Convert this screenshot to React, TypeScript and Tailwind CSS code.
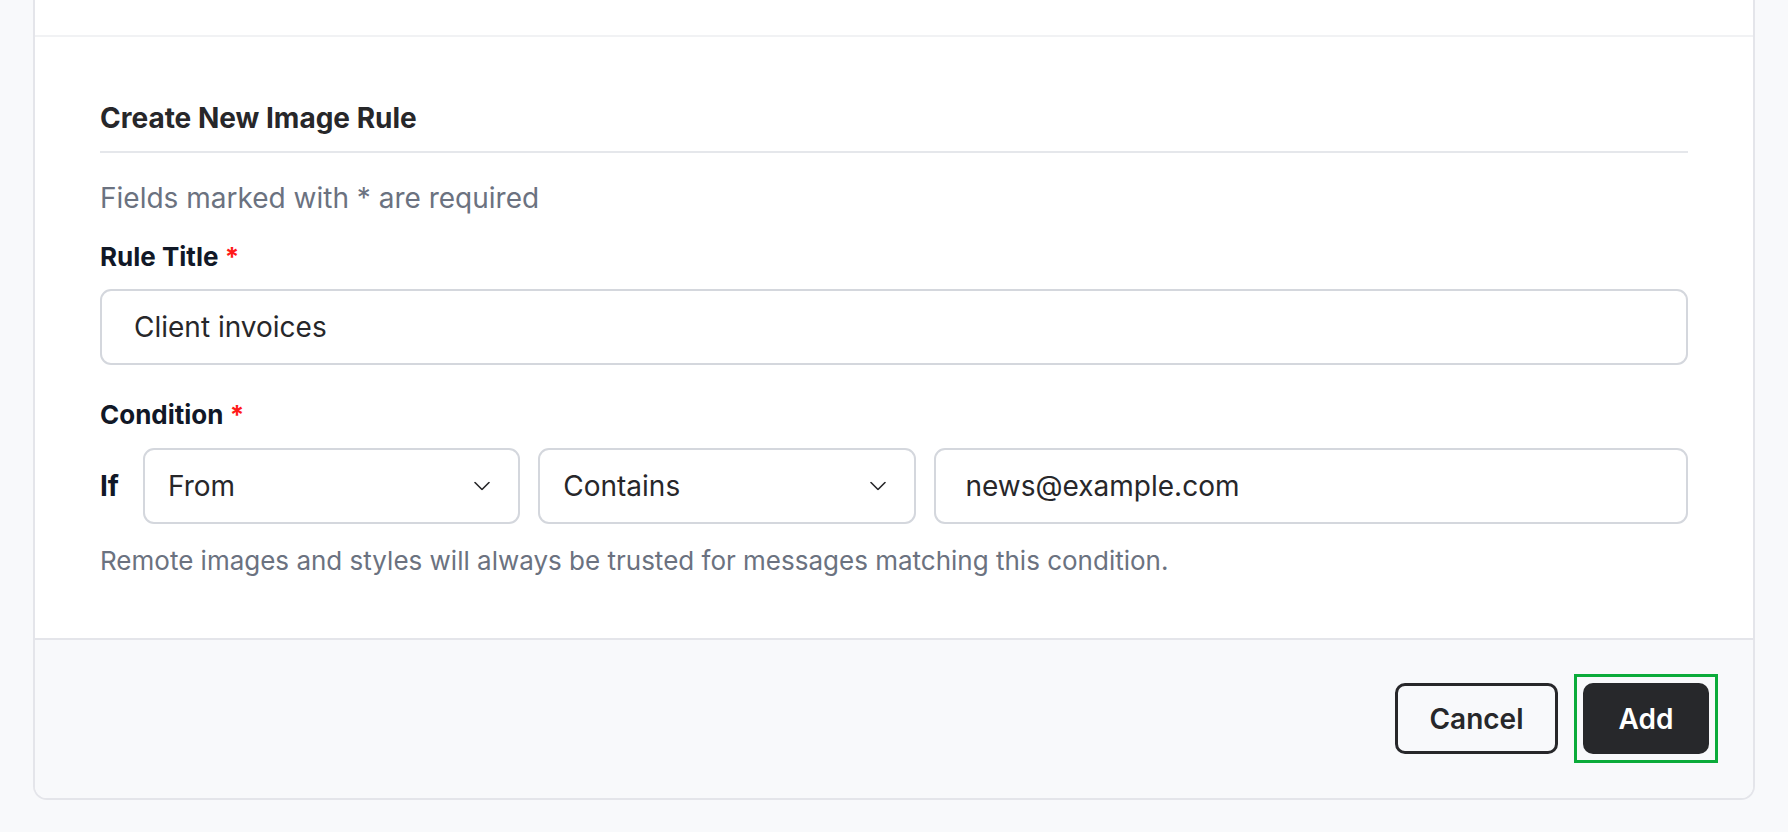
import { useState } from "react";

const fields = ["From", "To", "Subject"];
const operators = ["Contains", "Equals", "Starts with"];

function Chevron() {
  return (
    <svg
      width="16"
      height="9"
      viewBox="0 0 16 9"
      fill="none"
      stroke="#27272a"
      strokeWidth="1.6"
      strokeLinecap="round"
      strokeLinejoin="round"
      className="pointer-events-none absolute right-[30px] top-1/2 -translate-y-1/2"
    >
      <path d="M1 1l7 7 7-7" />
    </svg>
  );
}

function Select({ value, options, onChange }: { value: string; options: string[]; onChange: (v: string) => void }) {
  return (
    <div className="relative">
      <select
        value={value}
        onChange={(e) => onChange(e.target.value)}
        className="h-[76px] w-full appearance-none rounded-[11px] border-2 border-[#d4d7dd] bg-white pl-[23px] pr-12 text-[28px] text-[#27272a] outline-none"
      >
        {options.map((o) => (
          <option key={o}>{o}</option>
        ))}
      </select>
      <Chevron />
    </div>
  );
}

function Label({ children }: { children: string }) {
  return (
    <label className="block text-[26px] font-bold leading-[36px] text-[#111827]">
      {children} <span className="text-[#ff1a1a]">*</span>
    </label>
  );
}

export default function App() {
  const [title, setTitle] = useState("Client invoices");
  const [field, setField] = useState("From");
  const [op, setOp] = useState("Contains");
  const [match, setMatch] = useState("news@example.com");

  return (
    <div className="min-h-[832px] bg-[#f8f9fb] px-[33px] font-['Inter',sans-serif]">
      <div className="overflow-hidden rounded-b-[14px] border-x-2 border-b-2 border-[#e4e5ea] bg-white">
        {/* tail of the section above */}
        <div className="h-[37px] border-b-2 border-[#f1f2f4]" />

        <div className="px-[65px] pb-[59px] pt-[65px]">
          <h2 className="border-b-2 border-[#e5e7eb] pb-[17px] text-[28px] font-bold leading-[32px] text-[#27272a]">
            Create New Image Rule
          </h2>
          <p className="mt-[27px] text-[28px] leading-[36px] text-[#6b7280]">Fields marked with * are required</p>

          <div className="mt-[23px]">
            <Label>Rule Title</Label>
            <input
              value={title}
              onChange={(e) => setTitle(e.target.value)}
              className="mt-[14px] h-[76px] w-full rounded-[11px] border-2 border-[#d4d7dd] bg-white px-[32px] text-[28px] text-[#27272a] outline-none"
            />
          </div>

          <div className="mt-[32px]">
            <Label>Condition</Label>
            <div className="mt-[15px] flex items-center gap-[18px]">
              <span className="w-[25px] text-[28px] font-bold text-[#111827]">If</span>
              <div className="grid flex-1 grid-cols-[1fr_1fr_2fr] gap-[18px]">
                <Select value={field} options={fields} onChange={setField} />
                <Select value={op} options={operators} onChange={setOp} />
                <input
                  value={match}
                  onChange={(e) => setMatch(e.target.value)}
                  className="h-[76px] w-full rounded-[11px] border-2 border-[#d4d7dd] bg-white px-[30px] text-[28px] text-[#27272a] outline-none"
                />
              </div>
            </div>
            <p className="mt-[19px] text-[26px] leading-[36px] text-[#6b7280]">
              Remote images and styles will always be trusted for messages matching this condition.
            </p>
          </div>
        </div>

        <div className="flex items-center justify-end gap-[25px] border-t-2 border-[#e4e5ea] bg-[#f8f9fb] pb-[44px] pl-[41px] pr-[44px] pt-[43px]">
          <button className="h-[71px] w-[163px] rounded-[10px] border-[3px] border-[#27272a] text-[28px] font-semibold text-[#27272a]">
            Cancel
          </button>
          <div className="relative">
            <button className="h-[71px] w-[126px] rounded-[10px] bg-[#27282b] text-[28px] font-semibold text-white">
              Add
            </button>
            <span className="pointer-events-none absolute -inset-[9px] border-[3px] border-[#0bab3a]" />
          </div>
        </div>
      </div>
    </div>
  );
}
